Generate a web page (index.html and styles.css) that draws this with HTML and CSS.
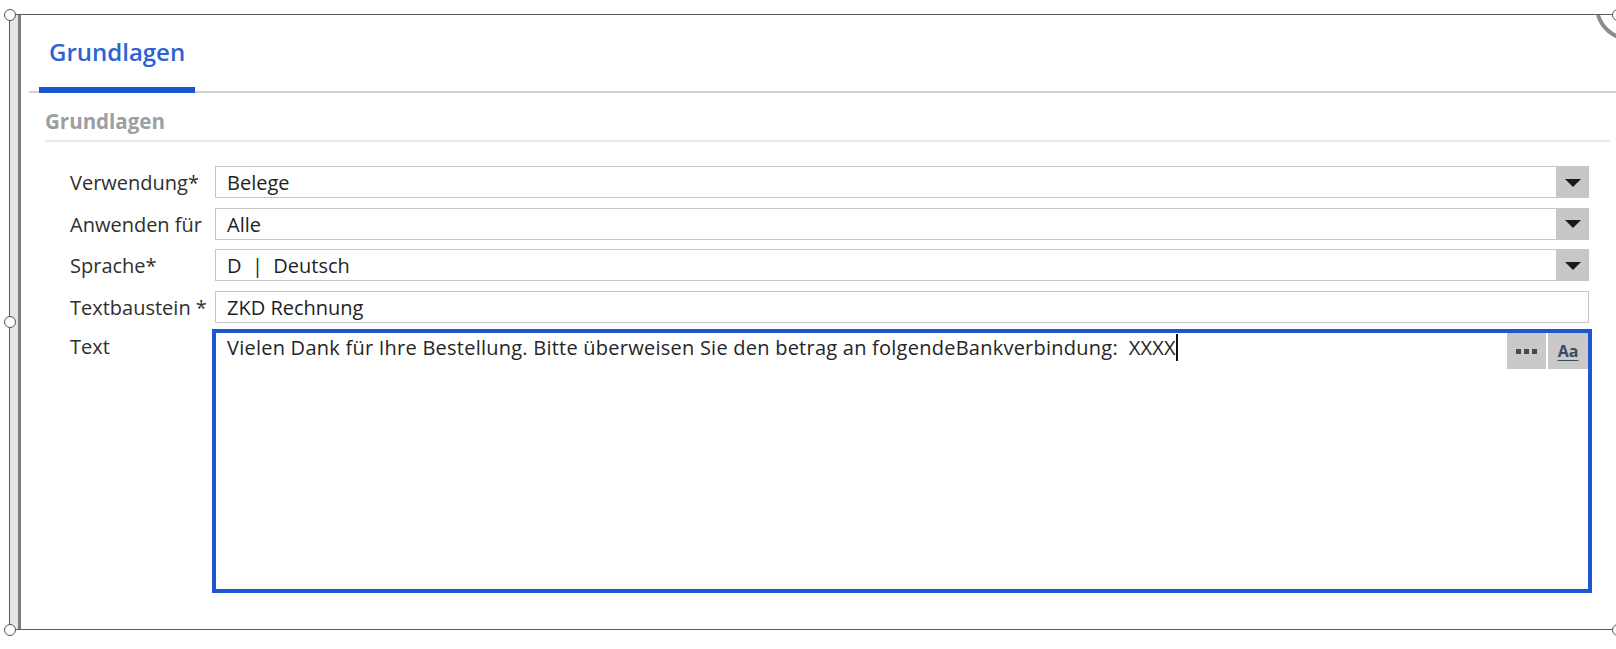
FILE: index.html
```html
<!DOCTYPE html>
<html lang="de">
<head>
<meta charset="utf-8">
<title>Grundlagen</title>
<link rel="stylesheet" href="styles.css">
</head>
<body>
<div class="frame">
  <div class="sidebar"></div>
  <div class="main">
    <div class="tabbar">
      <div class="tab">Grundlagen</div>
    </div>
    <div class="section">
      <div class="section-title">Grundlagen</div>
    </div>
    <div class="form">
      <div class="label">Verwendung*</div>
      <div class="field select">
        <div class="value">Belege</div>
        <div class="drop"><span class="tri"></span></div>
      </div>

      <div class="label">Anwenden für</div>
      <div class="field select">
        <div class="value">Alle</div>
        <div class="drop"><span class="tri"></span></div>
      </div>

      <div class="label">Sprache*</div>
      <div class="field select">
        <div class="value">D&nbsp; |&nbsp; Deutsch</div>
        <div class="drop"><span class="tri"></span></div>
      </div>

      <div class="label">Textbaustein *</div>
      <div class="field">
        <div class="value">ZKD Rechnung</div>
      </div>

      <div class="label label-top">Text</div>
      <div class="textarea">
        <div class="ta-text">Vielen Dank für Ihre Bestellung. Bitte überweisen Sie den betrag an folgendeBankverbindung:&nbsp; XXXX<span class="caret"></span></div>
        <div class="tools">
          <div class="tool"><span class="dot"></span><span class="dot"></span><span class="dot"></span></div>
          <div class="tool tool-aa">Aa</div>
        </div>
      </div>
    </div>
  </div>
  <svg class="arc" width="40" height="30" viewBox="0 0 40 30"><path d="M2 0 A34 34 0 0 0 31 24" fill="none" stroke="#8c8c8c" stroke-width="4"/></svg>
  <span class="handle h-tl"></span>
  <span class="handle h-ml"></span>
  <span class="handle h-bl"></span>
  <span class="handle h-tr"></span>
  <span class="handle h-br"></span>
</div>
</body>
</html>
```
FILE: styles.css
```css
html, body {
  margin: 0;
  padding: 0;
  background: #ffffff;
  overflow: hidden;
  width: 1616px;
  height: 649px;
}

body {
  font-family: "Open Sans", "Noto Sans", sans-serif;
  color: #2f2f2f;
}

.frame {
  position: relative;
  box-sizing: border-box;
  margin: 14px 0 0 9px;
  width: 1609px;
  height: 616px;
  border: 1px solid #5c5c5c;
  display: flex;
}

.sidebar {
  width: 8px;
  flex: none;
  background: #e6e6e6;
  border-right: 3px solid #7c7c7c;
}

.main {
  flex: 1;
  min-width: 0;
  display: flex;
  flex-direction: column;
}

.tabbar {
  margin-left: 8px;
  border-bottom: 2px solid #d2d2d2;
  display: flex;
}

.tab {
  margin-left: 10px;
  margin-bottom: -2px;
  padding: 20px 10px 19px;
  width: 136px;
  font-size: 24px;
  font-weight: 600;
  color: #2b63d6;
  border-bottom: 6px solid #1b55d0;
  white-space: nowrap;
}

.section {
  margin: 14px 7px 0 24px;
  border-bottom: 2px solid #e6e8eb;
  padding-bottom: 5px;
}

.section-title {
  font-size: 20.5px;
  font-weight: 700;
  color: #9c9ea2;
}

.form {
  margin: 24px 28px 0 49px;
  display: grid;
  grid-template-columns: 145px 1fr;
  row-gap: 9.5px;
}

.label {
  font-size: 20px;
  line-height: 30px;
  padding-top: 2px;
  color: #2f2f2f;
  white-space: nowrap;
}

.label-top {
  line-height: 27px;
  padding-top: 1px;
}

.field {
  box-sizing: border-box;
  height: 32px;
  border: 1px solid #c6c6c6;
  display: flex;
}

.value {
  flex: 1;
  padding: 2px 0 0 11px;
  font-size: 20px;
  line-height: 28px;
  color: #1f1f1f;
  white-space: nowrap;
}

.drop {
  width: 33px;
  margin: -1px -1px -1px 0;
  background: #c7c7c7;
  display: flex;
  align-items: center;
  justify-content: center;
}

.tri {
  width: 0;
  height: 0;
  border-left: 8px solid transparent;
  border-right: 8px solid transparent;
  border-top: 8px solid #1a1a1a;
  margin-top: 1px;
}

.textarea {
  box-sizing: border-box;
  height: 258px;
  border: 1px solid #1e56d0;
  outline: 3px solid #1e56d0;
  display: flex;
  align-items: flex-start;
}

.ta-text {
  flex: 1;
  padding: 1px 0 0 11px;
  font-size: 20px;
  line-height: 27px;
  letter-spacing: 0.24px;
  color: #262626;
  white-space: nowrap;
}

.caret {
  display: inline-block;
  width: 2px;
  height: 27px;
  background: #111;
  vertical-align: -6px;
  margin-left: 0;
}

.tools {
  display: flex;
  gap: 2px;
}

.tool {
  width: 39px;
  height: 36px;
  background: #c9c9c9;
  display: flex;
  align-items: center;
  justify-content: center;
  gap: 3px;
}

.dot {
  width: 5px;
  height: 5px;
  background: #4a4a4a;
}

.tool-aa {
  width: 40px;
  font-size: 16px;
  font-weight: 700;
  color: #3c4a5e;
  text-decoration: underline;
  text-underline-offset: 3px;
}

.arc {
  position: absolute;
  left: 1586px;
  top: 0;
}

.handle {
  position: absolute;
  box-sizing: border-box;
  width: 12px;
  height: 12px;
  border: 1.5px solid #555;
  border-radius: 50%;
  background: #fff;
}

.h-tl { left: -6.5px; top: -6.5px; }
.h-ml { left: -6.5px; top: 300.5px; }
.h-bl { left: -6.5px; bottom: -6.5px; }
.h-tr { right: -6.5px; top: -6.5px; }
.h-br { right: -6.5px; bottom: -6.5px; }
```
